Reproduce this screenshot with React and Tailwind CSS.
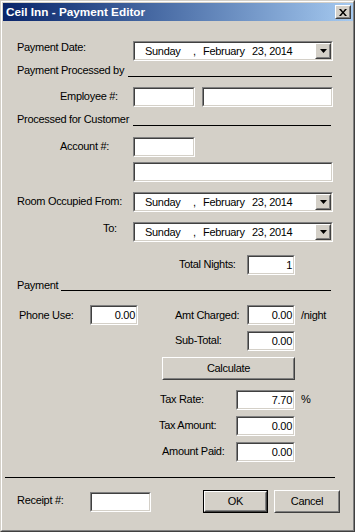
import React from 'react';

const Field = ({ className = '', value = '' }) => (
  <div className={`box-border h-[20px] border border-t-[#808080] border-l-[#808080] border-b-white border-r-white bg-white ${className}`}>
    <div className="box-border h-full border border-t-[#404040] border-l-[#404040] border-b-[#d4d0c8] border-r-[#d4d0c8] flex items-center justify-end pr-[1px] leading-[13px]">
      {value}
    </div>
  </div>
);

const Raised = ({ className = '', children }) => (
  <div className={`box-border border border-t-white border-l-white border-b-[#404040] border-r-[#404040] bg-[#d4d0c8] ${className}`}>
    <div className="box-border h-full border border-t-[#d4d0c8] border-l-[#d4d0c8] border-b-[#808080] border-r-[#808080] flex items-center justify-center">
      {children}
    </div>
  </div>
);

const DatePicker = () => (
  <div className="box-border h-[20px] w-[200px] border border-t-[#808080] border-l-[#808080] border-b-white border-r-white bg-white">
    <div className="box-border h-full border border-t-[#404040] border-l-[#404040] border-b-[#d4d0c8] border-r-[#d4d0c8] flex items-center">
      <span className="ml-[10px] w-[48px] leading-[13px]">Sunday</span>
      <span className="w-[10px] leading-[13px]">,</span>
      <span className="w-[49px] leading-[13px]">February</span>
      <span className="leading-[13px]">23, 2014</span>
      <Raised className="ml-auto w-[16px] h-[16px]">
        <svg width="7" height="4" viewBox="0 0 7 4">
          <polygon points="0,0 7,0 3.5,4" fill="#000" />
        </svg>
      </Raised>
    </div>
  </div>
);

const Label = ({ className = '', children }) => (
  <div className={`leading-[13px] whitespace-nowrap ${className}`}>{children}</div>
);

export default function App() {
  return (
    <div className="w-[355px] h-[532px] box-border border border-t-[#d4d0c8] border-l-[#d4d0c8] border-b-[#404040] border-r-[#404040] bg-[#d4d0c8] font-['Liberation_Sans',Arial,sans-serif] text-[11px] tracking-[-0.3px] text-black">
      <div className="box-border h-full border border-t-white border-l-white border-b-[#808080] border-r-[#808080] pt-[1px] pl-[1px] flex flex-col">
        <div className="h-[18px] flex items-center justify-between pl-[3px] pr-[2px] bg-linear-to-r from-[#0a246a] to-[#a6caf0]">
          <span className="text-white font-bold text-[11.75px] tracking-normal leading-[14px]">Ceil Inn - Payment Editor</span>
          <Raised className="w-[16px] h-[14px]">
            <svg width="8" height="7" viewBox="0 0 8 7">
              <path d="M0 0h2l2 2.4L6 0h2L5 3.5 8 7H6L4 4.6 2 7H0l3-3.5z" fill="#000" />
            </svg>
          </Raised>
        </div>

        <div className="flex flex-col">
          <div className="mt-[20px] flex items-start">
            <Label className="ml-[14px] w-[116px]">Payment Date:</Label>
            <DatePicker />
          </div>

          <div className="mt-[3px] flex items-start">
            <Label className="ml-[14px] w-[111px]">Payment Processed by</Label>
            <div className="mt-[12px] h-px w-[204px] bg-black" />
          </div>

          <div className="mt-[10px] flex items-start">
            <Label className="ml-[57px] w-[73px] mt-[3px]">Employee #:</Label>
            <Field className="w-[62px]" />
            <Field className="ml-[7px] w-[131px]" />
          </div>

          <div className="mt-[6px] flex items-start">
            <Label className="ml-[14px] w-[116px]">Processed for Customer</Label>
            <div className="mt-[12px] h-px w-[198px] bg-black" />
          </div>

          <div className="mt-[11px] flex items-start">
            <Label className="ml-[57px] w-[73px] mt-[3px]">Account #:</Label>
            <Field className="w-[62px]" />
          </div>

          <div className="mt-[5px] flex items-start">
            <Field className="ml-[130px] w-[200px]" />
          </div>

          <div className="mt-[10px] flex items-start">
            <Label className="ml-[14px] w-[116px] mt-[3px]">Room Occupied From:</Label>
            <DatePicker />
          </div>

          <div className="mt-[10px] flex items-start">
            <Label className="ml-[100px] w-[30px]">To:</Label>
            <DatePicker />
          </div>

          <div className="mt-[13px] flex items-start">
            <Label className="ml-[176px] w-[68px] mt-[3px]">Total Nights:</Label>
            <Field className="w-[48px]" value="1" />
          </div>

          <div className="mt-[4px] flex items-start">
            <Label className="ml-[14px] w-[44px]">Payment</Label>
            <div className="mt-[11px] h-px w-[270px] bg-black" />
          </div>

          <div className="mt-[13px] flex items-start">
            <Label className="ml-[16px] w-[71px] mt-[4px]">Phone Use:</Label>
            <Field className="w-[48px]" value="0.00" />
            <Label className="ml-[37px] w-[72px] mt-[4px]">Amt Charged:</Label>
            <Field className="w-[48px]" value="0.00" />
            <Label className="ml-[6px] mt-[4px]">/night</Label>
          </div>

          <div className="mt-[6px] flex items-start">
            <Label className="ml-[172px] w-[72px] mt-[3px]">Sub-Total:</Label>
            <Field className="w-[48px]" value="0.00" />
          </div>

          <div className="mt-[6px] flex items-start">
            <Raised className="ml-[159px] w-[133px] h-[23px]">
              <span className="leading-[13px]">Calculate</span>
            </Raised>
          </div>

          <div className="mt-[10px] flex items-start">
            <Label className="ml-[157px] w-[76px] mt-[3px]">Tax Rate:</Label>
            <Field className="w-[59px]" value="7.70" />
            <Label className="ml-[6px] mt-[3px]">%</Label>
          </div>

          <div className="mt-[6px] flex items-start">
            <Label className="ml-[156px] w-[77px] mt-[3px]">Tax Amount:</Label>
            <Field className="w-[59px]" value="0.00" />
          </div>

          <div className="mt-[6px] flex items-start">
            <Label className="ml-[159px] w-[74px] mt-[3px]">Amount Paid:</Label>
            <Field className="w-[59px]" value="0.00" />
          </div>

          <div className="mt-[15px] ml-[2px] h-px w-[330px] bg-black" />

          <div className="mt-[12px] flex items-start">
            <Label className="ml-[14px] w-[73px] mt-[4px]">Receipt #:</Label>
            <Field className="mt-[2px] w-[61px]" />
            <div className="ml-[52px] box-border w-[65px] h-[23px] border border-black">
              <Raised className="w-full h-full">
                <span className="leading-[13px]">OK</span>
              </Raised>
            </div>
            <Raised className="ml-[6px] w-[66px] h-[23px]">
              <span className="leading-[13px]">Cancel</span>
            </Raised>
          </div>
        </div>
      </div>
    </div>
  );
}
